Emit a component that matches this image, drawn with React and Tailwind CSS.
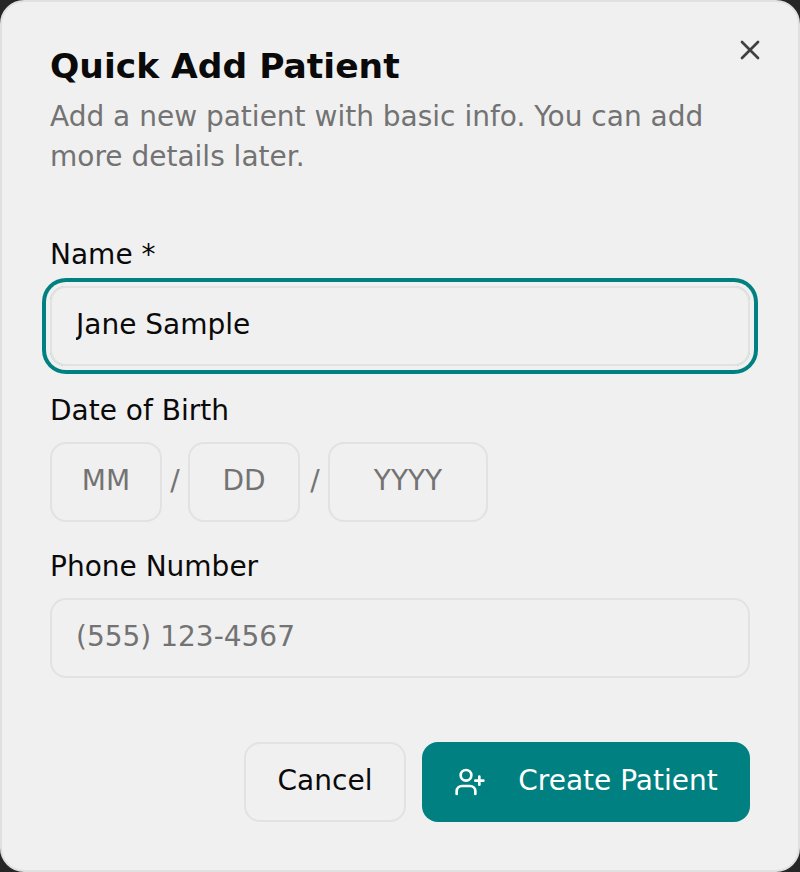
import { UserPlus, X } from 'lucide-react';

const fieldClass =
  'h-[80px] rounded-[16px] border-2 border-[#e2e2e2] bg-transparent pb-[3px] text-[28px] text-[#0a0a0a] placeholder:text-[#737373] outline-none';
const labelClass = 'pb-[2px] text-[28px] leading-[38px] text-[#0a0a0a]';

const App = () => {
  return (
    <div className="h-[872px] w-[800px] bg-[#262626] font-['DejaVu_Sans',sans-serif]">
      <div className="relative flex h-full flex-col rounded-[24px] border-2 border-[#e0e0e0] bg-[#f0f0f0] px-[48px] pt-[44px]">
        <button className="absolute right-[32px] top-[32px] text-[#404040]">
          <X size={32} strokeWidth={2} />
        </button>

        <h2 className="text-[34.5px] font-bold leading-[40px] text-[#0a0a0a]">Quick Add Patient</h2>
        <p className="mt-[11px] text-[28px] leading-[40px] text-[#737373]">
          Add a new patient with basic info. You can add more details later.
        </p>

        <div className="mt-[59px] flex flex-col">
          <label className={labelClass}>Name *</label>
          <input
            className={`${fieldClass} mt-[10px] w-full px-[24px] ring-4 ring-[#008080] ring-offset-4 ring-offset-[#f0f0f0]`}
            defaultValue="Jane Sample"
          />

          <label className={`mt-[26px] ${labelClass}`}>Date of Birth</label>
          <div className="mt-[10px] flex items-center">
            <input className={`${fieldClass} w-[112px] text-center`} placeholder="MM" />
            <span className="w-[26px] pb-[2px] text-center text-[28px] text-[#737373]">/</span>
            <input className={`${fieldClass} w-[112px] text-center`} placeholder="DD" />
            <span className="w-[28px] pb-[2px] pl-[2px] text-center text-[28px] text-[#737373]">/</span>
            <input className={`${fieldClass} w-[160px] text-center`} placeholder="YYYY" />
          </div>

          <label className={`mt-[26px] ${labelClass}`}>Phone Number</label>
          <input
            className={`${fieldClass} mt-[10px] w-full px-[24px]`}
            placeholder="(555) 123-4567"
          />
        </div>

        <div className="mt-[64px] flex justify-end gap-[16px]">
          <button className="h-[80px] w-[162px] rounded-[16px] border-2 border-[#e2e2e2] pb-[2px] text-[28px] text-[#0a0a0a]">
            Cancel
          </button>
          <button className="flex h-[80px] w-[328px] items-center justify-center gap-[32px] rounded-[16px] bg-[#008080] text-[28px] text-white">
            <UserPlus size={32} strokeWidth={2} />
            <span className="pb-[2px]">Create Patient</span>
          </button>
        </div>
      </div>
    </div>
  );
};

export default App;
